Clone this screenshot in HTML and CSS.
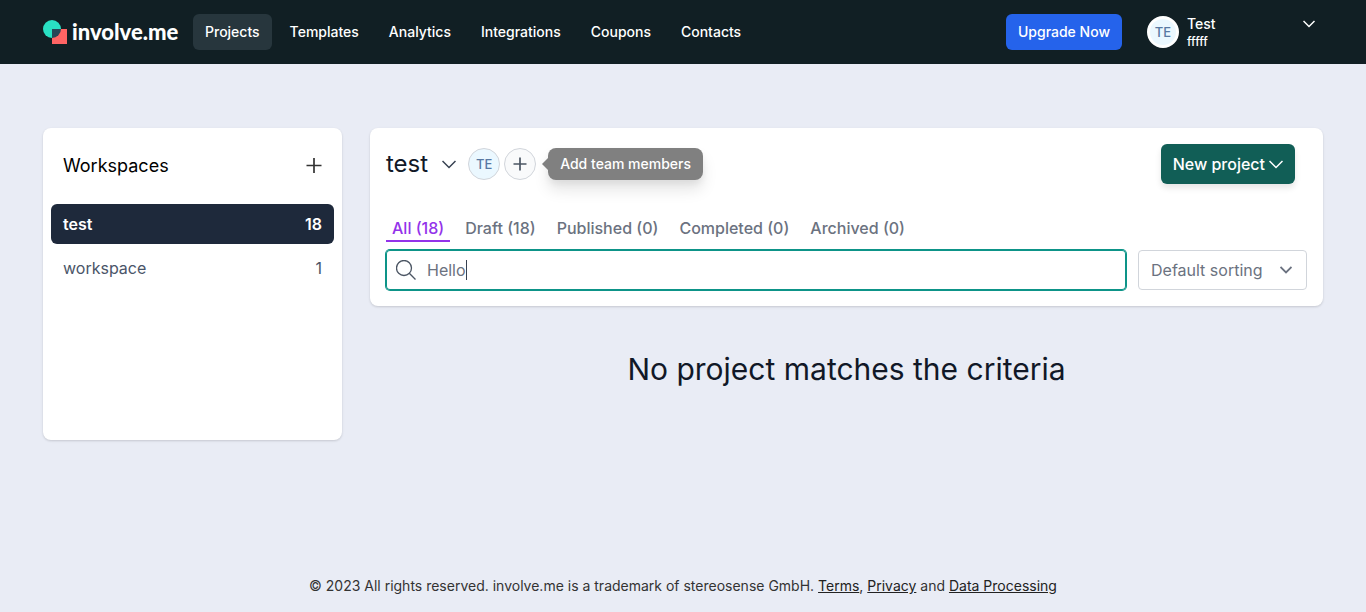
FILE: index.html
```html
<!DOCTYPE html>
<html lang="en">
<head>
<meta charset="utf-8">
<meta name="viewport" content="width=device-width, initial-scale=1">
<title>Projects - involve.me</title>
<link rel="stylesheet" href="styles.css">
</head>
<body>
<header class="topbar">
  <div class="container topbar-inner">
    <a class="logo" href="#">
      <svg class="logo-mark" width="24" height="24" viewBox="0 0 24 24" aria-hidden="true">
        <circle cx="9" cy="9" r="9" fill="#29e0c3"/>
        <path d="M9 9h15v15H9z" fill="#ff6464"/>
        <path d="M9 9h9a9 9 0 0 1-9 9z" fill="#274657"/>
      </svg>
      <span>involve.me</span>
    </a>
    <nav class="nav">
      <a class="nav-link active" href="#">Projects</a>
      <a class="nav-link" href="#">Templates</a>
      <a class="nav-link" href="#">Analytics</a>
      <a class="nav-link" href="#">Integrations</a>
      <a class="nav-link" href="#">Coupons</a>
      <a class="nav-link" href="#">Contacts</a>
    </nav>
    <button class="upgrade" type="button">Upgrade Now</button>
    <button class="account" type="button">
      <span class="avatar avatar-ring">TE</span>
      <span class="account-text"><span class="account-name">Test</span><span class="account-org">fffff</span></span>
      <svg class="account-chevron" width="12" height="8" viewBox="0 0 12 8" fill="none" stroke="currentColor" stroke-width="1.5" aria-hidden="true"><path d="M.5 1 6 6.500 11.500 1"/></svg>
    </button>
  </div>
</header>

<main class="container layout">
  <aside class="card sidebar">
    <div class="sidebar-head">
      <h2 class="sidebar-title">Workspaces</h2>
      <button class="icon-button" type="button" aria-label="Add workspace">
        <svg width="16" height="16" viewBox="0 0 16 16" fill="none" stroke="currentColor" stroke-width="1.700" aria-hidden="true"><path d="M.5 7.500h15M8 0v15"/></svg>
      </button>
    </div>
    <a class="workspace active" href="#"><span>test</span><span>18</span></a>
    <a class="workspace" href="#"><span>workspace</span><span>1</span></a>
  </aside>

  <section class="content">
    <div class="card panel">
      <div class="panel-head">
        <button class="project-switch" type="button">test
          <svg width="14" height="9" viewBox="0 0 14 9" fill="none" stroke="currentColor" stroke-width="1.500" aria-hidden="true"><path d="m.5 1 6.500 6.500L13.500 1"/></svg>
        </button>
        <span class="avatar avatar-outline">TE</span>
        <div class="add-member">
          <button class="avatar add-button" type="button" aria-label="Add team members">
            <svg width="14" height="14" viewBox="0 0 14 14" fill="none" stroke="currentColor" stroke-width="1.700" aria-hidden="true"><path d="M.5 7h13M7 .5v13"/></svg>
          </button>
          <span class="tooltip" role="tooltip">Add team members</span>
        </div>
        <button class="new-project" type="button">New project
          <svg width="14" height="9" viewBox="0 0 14 9" fill="none" stroke="currentColor" stroke-width="1.500" aria-hidden="true"><path d="m.5 1 6.500 6.500L13.500 1"/></svg>
        </button>
      </div>
      <nav class="tabs">
        <a class="tab active" href="#">All (18)</a>
        <a class="tab" href="#">Draft (18)</a>
        <a class="tab" href="#">Published (0)</a>
        <a class="tab" href="#">Completed (0)</a>
        <a class="tab" href="#">Archived (0)</a>
      </nav>
      <div class="filters">
        <label class="search">
          <svg width="20" height="20" viewBox="0 0 20 20" fill="none" stroke="currentColor" stroke-width="1.300" aria-hidden="true"><circle cx="8" cy="8" r="7.500"/><path d="m13.300 13.300 6.200 6.200"/></svg>
          <input class="search-input" type="text" value="Hello" aria-label="Search projects" autofocus>
        </label>
        <div class="sort">
          <select class="sort-select" aria-label="Sorting"><option>Default sorting</option></select>
          <svg class="sort-chevron" width="12" height="8" viewBox="0 0 12 8" fill="none" stroke="currentColor" stroke-width="1.800" aria-hidden="true"><path d="M.5 1 6 6.500 11.500 1"/></svg>
        </div>
      </div>
    </div>
    <h1 class="empty">No project matches the criteria</h1>
  </section>
</main>

<footer class="footer">© 2023 All rights reserved. involve.me is a trademark of stereosense GmbH. <a href="#">Terms</a>, <a href="#">Privacy</a> and <a href="#">Data Processing</a></footer>
</body>
</html>
```

FILE: styles.css
```css
* { box-sizing: border-box; }

body {
  margin: 0;
  min-height: 100vh;
  display: flex;
  flex-direction: column;
  background: #e9ecf5;
  color: #111827;
  font: 16px/24px Inter, "Liberation Sans", sans-serif;
}

a { color: inherit; text-decoration: none; }
button { border: 0; padding: 0; background: none; color: inherit; font: inherit; cursor: pointer; }
svg { flex: none; }

.container { width: 100%; max-width: 1280px; margin: 0 auto; }

.topbar { background: #111f24; color: #fff; }
.topbar-inner { display: flex; align-items: center; height: 64px; }
.logo { display: flex; align-items: center; gap: 5px; width: 150px; font: 900 22px/28px Lato, sans-serif; }

.nav { display: flex; gap: 6px; flex: 1; }
.nav-link { padding: 8px 12px; border-radius: 6px; font-size: 14px; line-height: 20px; font-weight: 500; }
.nav-link.active { background: #27363d; }

.upgrade { padding: 8px 12px; border-radius: 6px; background: #2563eb; font-size: 14px; line-height: 20px; font-weight: 500; }

.account { display: flex; align-items: center; gap: 8px; width: 176px; margin-left: 25px; text-align: left; }
.account-text { display: flex; flex-direction: column; flex: 1; }
.account-name { font-size: 14px; line-height: 20px; font-weight: 500; }
.account-org { font-size: 12px; line-height: 16px; font-weight: 500; }
.account-chevron { align-self: flex-start; margin-top: 6px; margin-right: 8px; }

.avatar {
  display: flex;
  align-items: center;
  justify-content: center;
  width: 32px;
  height: 32px;
  border-radius: 50%;
  background: #ebf8ff;
  color: #5879a3;
  font-size: 13px;
  line-height: 20px;
  font-weight: 500;
}
.avatar-ring { border: 3px solid #fff; }
.avatar-outline { border: 1px solid #d1d5db; }

.layout { display: grid; grid-template-columns: 299px minmax(0, 1fr); gap: 28px; align-items: start; padding-top: 64px; }
.card { background: #fff; border-radius: 8px; box-shadow: 0 1px 3px rgba(0, 0, 0, .1), 0 1px 2px rgba(0, 0, 0, .06); }

.sidebar { min-height: 312px; padding: 24px 8px; }
.sidebar-head { display: flex; align-items: center; justify-content: space-between; padding: 0 12px; margin-bottom: 24px; }
.sidebar-title { margin: 0; font-size: 18px; line-height: 28px; font-weight: 400; color: #000; }
.icon-button { display: flex; color: #333; }
.workspace { display: flex; justify-content: space-between; padding: 8px 12px; margin-bottom: 4px; border-radius: 6px; color: #4a5568; }
.workspace.active { background: #1e293b; color: #fff; font-weight: 600; }

.panel { padding: 16px; }
.panel-head { display: flex; align-items: center; gap: 4px; padding-right: 12px; }
.project-switch { display: flex; align-items: center; gap: 14px; margin-right: 8px; font-size: 24px; line-height: 32px; }
.project-switch svg { color: #374151; }
.add-member { position: relative; }
.add-button { border: 1px solid #d1d5db; background: #f9fafb; color: #4b5563; }
.tooltip {
  position: absolute;
  top: 0;
  left: 44px;
  padding: 6px 12px;
  border-radius: 8px;
  background: #808080;
  color: #fff;
  font-size: 14px;
  line-height: 20px;
  font-weight: 500;
  white-space: nowrap;
  box-shadow: 0 10px 15px rgba(0, 0, 0, .1), 0 4px 6px rgba(0, 0, 0, .05);
}
.tooltip::before {
  content: "";
  position: absolute;
  top: 10px;
  left: -6px;
  border: 6px solid transparent;
  border-left-width: 0;
  border-right-color: #808080;
}
.new-project {
  display: flex;
  align-items: center;
  gap: 4px;
  margin-left: auto;
  padding: 8px 12px;
  border-radius: 6px;
  background: #115e56;
  color: #fff;
  font-weight: 500;
  box-shadow: 0 4px 6px rgba(0, 0, 0, .1);
}

.tabs { display: flex; gap: 9px; margin-top: 32px; }
.tab { padding: 0 6px; border-bottom: 2px solid transparent; color: #6b7280; font-weight: 500; }
.tab.active { border-color: #9333ea; color: #9333ea; }

.filters { display: flex; gap: 12px; margin-top: 8px; }
.search {
  display: flex;
  align-items: center;
  gap: 11px;
  flex: 1;
  height: 40px;
  padding: 0 10px;
  border-radius: 4px;
  box-shadow: 0 0 0 1px #0d9488, inset 0 0 0 1px #0d9488;
  color: #4b5563;
  cursor: text;
}
.search-input {
  field-sizing: content;
  max-width: 100%;
  height: 20px;
  padding: 0;
  border: 0;
  border-right: 1px solid #374151;
  border-radius: 0;
  outline: 0;
  background: none;
  caret-color: transparent;
  color: #6b7280;
  font: inherit;
}
.sort { position: relative; width: 169px; }
.sort-select {
  appearance: none;
  width: 100%;
  height: 40px;
  padding: 0 12px;
  border: 1px solid #d1d5db;
  border-radius: 4px;
  background: #fff;
  color: #6b7280;
  font: inherit;
}
.sort-chevron { position: absolute; top: 16px; right: 15px; color: #6b7280; pointer-events: none; }

.empty { margin: 43px 0 0; text-align: center; font-size: 30px; line-height: 40px; font-weight: 400; }

.footer { margin-top: auto; padding: 16px; text-align: center; font-size: 14px; line-height: 20px; color: #333; }
.footer a { color: #222; text-decoration: underline; }
```
